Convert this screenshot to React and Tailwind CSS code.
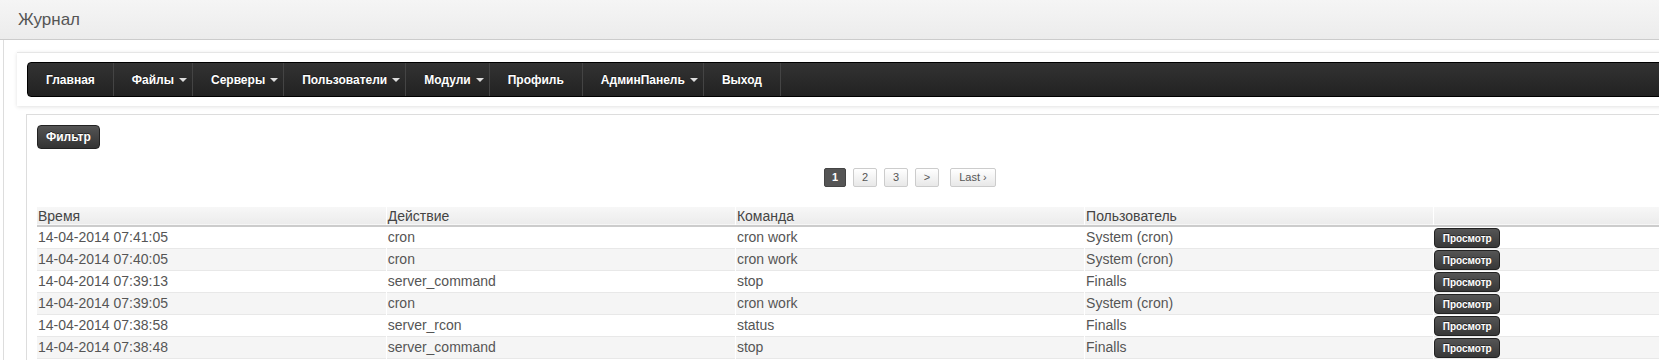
import React from 'react'

const navItems = [
  { label: 'Главная' },
  { label: 'Файлы', caret: true },
  { label: 'Серверы', caret: true },
  { label: 'Пользователи', caret: true },
  { label: 'Модули', caret: true },
  { label: 'Профиль' },
  { label: 'АдминПанель', caret: true },
  { label: 'Выход' },
]

const rows = [
  ['14-04-2014 07:41:05', 'cron', 'cron work', 'System (cron)'],
  ['14-04-2014 07:40:05', 'cron', 'cron work', 'System (cron)'],
  ['14-04-2014 07:39:13', 'server_command', 'stop', 'Finalls'],
  ['14-04-2014 07:39:05', 'cron', 'cron work', 'System (cron)'],
  ['14-04-2014 07:38:58', 'server_rcon', 'status', 'Finalls'],
  ['14-04-2014 07:38:48', 'server_command', 'stop', 'Finalls'],
  ['14-04-2014 07:38:05', 'cron', 'cron work', 'System (cron)'],
]

function Caret() {
  return <span className="ml-[5px] mt-[1px] inline-block h-0 w-0 border-x-[4px] border-t-[4px] border-x-transparent border-t-[#ddd]" />
}

function PageBtn({ children, active, wide }) {
  if (active) {
    return (
      <span className="flex h-[19px] w-[22px] items-center justify-center rounded-[2px] border border-[#444] bg-[#555] text-[11px] font-bold text-white">
        {children}
      </span>
    )
  }
  return (
    <span className={`flex h-[19px] items-center justify-center rounded-[2px] border border-[#ccc] bg-gradient-to-b from-white to-[#e8e8e8] text-[11px] text-[#555] ${wide ? 'w-[46px]' : 'w-[24px]'}`}>
      {children}
    </span>
  )
}

export default function App() {
  return (
    <div className="w-full overflow-hidden bg-white font-['Liberation_Sans',Arial,sans-serif]">
      <div className="w-[1820px]">
        <div className="flex h-[40px] items-center border-b border-[#ccc] bg-gradient-to-b from-[#f5f5f5] to-[#ececec] pl-[18px] text-[17px] text-[#555]">
          Журнал
        </div>

        <div className="ml-[3px] border-l border-[#ddd] pb-[20px] pl-[13px] pt-[12px]">
          <div className="w-[1790px] border-t border-[#e6e6e6] bg-white px-[10px] py-[9px] shadow-[0_1px_4px_rgba(0,0,0,0.12)]">
            <div className="flex h-[35px] rounded-[4px] border border-black bg-gradient-to-b from-[#333] to-[#222]">
              {navItems.map((item) => (
                <div
                  key={item.label}
                  className={`flex items-center border-r border-[#444] text-[12px] font-bold text-white [text-shadow:0_-1px_0_rgba(0,0,0,0.4)] ${item.caret ? 'pl-[18px] pr-[5px]' : 'px-[18px]'}`}
                >
                  {item.label}
                  {item.caret && <Caret />}
                </div>
              ))}
            </div>
          </div>

          <div className="ml-[9px] mt-[8px] w-[1768px] border border-[#ddd] bg-white px-[10px] pt-[9px]">
            <button className="h-[24px] rounded-[4px] border border-[#222] bg-gradient-to-b from-[#555] to-[#333] px-[8px] text-[12px] font-bold text-white [text-shadow:0_-1px_0_rgba(0,0,0,0.5)]">
              Фильтр
            </button>

            <div className="mt-[19px] flex justify-center gap-[7px]">
              <PageBtn active>1</PageBtn>
              <PageBtn>2</PageBtn>
              <PageBtn>3</PageBtn>
              <PageBtn>&gt;</PageBtn>
              <span className="ml-[4px]">
                <PageBtn wide>Last ›</PageBtn>
              </span>
            </div>

            <table className="mt-[20px] w-[1746px] table-fixed border-collapse text-[14px] text-[#555]">
              <thead>
                <tr className="h-[18px] border-b-2 border-[#ccc] bg-gradient-to-b from-[#f7f7f7] to-[#ececec] text-left">
                  {['Время', 'Действие', 'Команда', 'Пользователь', ''].map((h, i) => (
                    <th key={i} className="border-l border-white py-0 pl-[1px] text-left font-normal leading-[18px] text-[#444] first:border-l-0">
                      {h}
                    </th>
                  ))}
                </tr>
              </thead>
              <tbody>
                {rows.map((r, idx) => (
                  <tr key={idx} className={`h-[22px] border-t border-[#e8e8e8] ${idx % 2 === 1 ? 'bg-[#f5f5f5]' : 'bg-white'}`}>
                    {r.map((c, i) => (
                      <td key={i} className="border-l border-white p-0 pl-[1px] leading-[21px] first:border-l-0">
                        {c}
                      </td>
                    ))}
                    <td className="border-l border-white p-0 align-top">
                      <button className="mt-[1px] block h-[20px] w-[66px] rounded-[4px] border border-[#222] bg-gradient-to-b from-[#555] to-[#383838] text-[10px] font-bold text-white [text-shadow:0_-1px_0_rgba(0,0,0,0.5)]">
                        Просмотр
                      </button>
                    </td>
                  </tr>
                ))}
              </tbody>
            </table>
          </div>
        </div>
      </div>
    </div>
  )
}
